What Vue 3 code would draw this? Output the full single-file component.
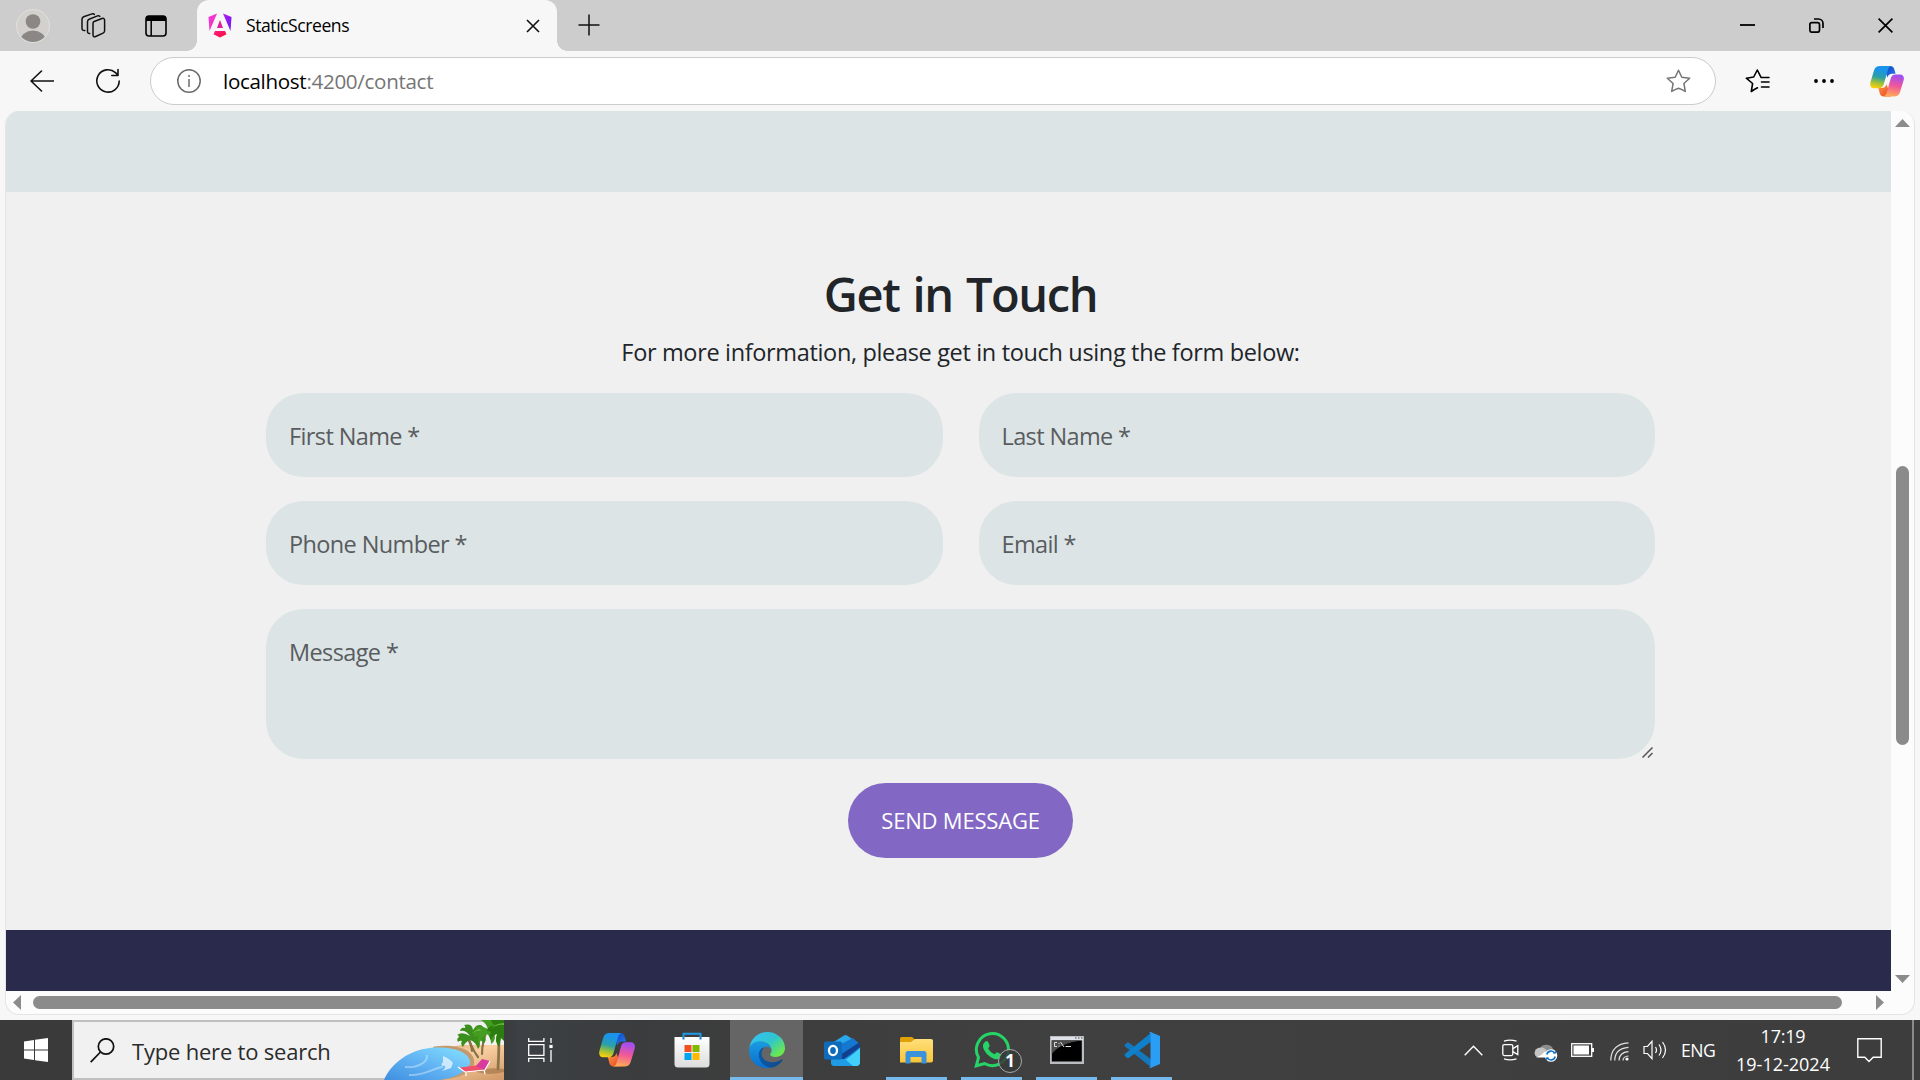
<script setup>
const names = [
  { id: 'first', label: 'First Name *' },
  { id: 'last', label: 'Last Name *' },
  { id: 'phone', label: 'Phone Number *' },
  { id: 'email', label: 'Email *' },
]
</script>

<template>
  <div class="screen">
    <svg class="defs" width="0" height="0">
      <defs>
        <linearGradient id="cpA" x1="0.5" y1="0" x2="0.3" y2="1">
          <stop offset="0.15" stop-color="#1a93ea" /><stop offset="0.5" stop-color="#2ba0a5" />
          <stop offset="0.75" stop-color="#9bc03a" /><stop offset="1" stop-color="#ffcf0a" />
        </linearGradient>
        <linearGradient id="cpB" x1="0.6" y1="0" x2="0.4" y2="1">
          <stop offset="0.05" stop-color="#a34ff0" /><stop offset="0.5" stop-color="#f0579a" />
          <stop offset="1" stop-color="#ffac55" />
        </linearGradient>
        <linearGradient id="cpC" x1="0" y1="0" x2="1" y2="1">
          <stop offset="0" stop-color="#0b3fc0" /><stop offset="1" stop-color="#2b7cf0" />
        </linearGradient>
        <linearGradient id="cpD" x1="0" y1="0" x2="1" y2="1">
          <stop offset="0" stop-color="#ff9a3c" /><stop offset="1" stop-color="#e8402c" />
        </linearGradient>
        <symbol id="copilot" viewBox="0 0 36 34">
          <path fill="url(#cpC)" d="M14 0h7.500c2 0 3.300 1 4 3l1.600 5.500h-3.600c-2.800 0-4.200 1.300-5 4L15 3z" />
          <path fill="url(#cpD)" d="M22 33.500h-7.500c-2 0-3.300-1-4-3L8.800 24h3.700c2.800 0 4.200-1.300 5-4L21 30z" />
          <path fill="url(#cpA)" d="M10.500 0H23c-2.500.3-3.400 2-4.200 4.800L14.500 20c-.9 3-2.300 4.300-5 4.300H4.300C.8 24.300-.3 21.500.4 18L4.300 4.600C5.300 1.400 7.500 0 10.500 0z" />
          <path fill="url(#cpB)" d="M25.500 33.500H13.800c2.400-.4 3.300-2 4-4.600L22 13.500c.9-3 2.200-4.300 5-4.300h4.800c3.500 0 4.600 2.800 3.900 6.200l-4 13.500c-1 3.200-3.200 4.600-6.200 4.600z" />
        </symbol>
      </defs>
    </svg>

    <header class="tabstrip">
      <svg class="avatar" width="34" height="34" viewBox="0 0 34 34">
        <defs><clipPath id="avc"><circle cx="17" cy="17" r="16" /></clipPath></defs>
        <circle cx="17" cy="17" r="16.500" fill="#d3d1ce" stroke="#e2e0dc" />
        <g fill="#8b8784" clip-path="url(#avc)"><circle cx="17" cy="12.500" r="7.300" /><ellipse cx="17" cy="31.500" rx="12.500" ry="10" /></g>
      </svg>
      <svg class="collections" width="26" height="26" viewBox="0 0 26 26" fill="none" stroke="#111" stroke-width="1.500" stroke-linejoin="round" stroke-linecap="round">
        <path d="M13.500 8.800l8.500-3.300c1.500-.5 2.600.2 2.600 1.700v10.600c0 1.200-.5 1.900-1.500 2.300l-7.500 3.400c-1.500.6-2.600 0-2.600-1.600V11c0-1.100-.1-1.700.5-2.200z" />
        <path d="M9.800 20.400c-1.500.2-2.300-.5-2.300-2V8.700c0-1.200.6-2 1.600-2.400l8.400-3.400c1-.4 1.800-.2 2.300.5" />
        <path d="M4.800 17.500c-1.600.2-2.800-.4-2.800-2V6.200C2 5 2.600 4.200 3.600 3.800L12 .9c1-.3 1.800-.2 2.300.5" />
      </svg>
      <svg class="tabmenu" width="22" height="22" viewBox="0 0 22 22">
        <rect x="1" y="1" width="20" height="20" rx="3" fill="none" stroke="#000" stroke-width="1.600" />
        <path d="M1 6V4a3 3 0 0 1 3-3h14a3 3 0 0 1 3 3v2z" /><path d="M6.200 5v16" stroke="#000" stroke-width="1.500" />
      </svg>
      <div class="tab">
        <svg width="24" height="25" viewBox="0 0 24 25">
          <defs>
            <linearGradient id="ngL" x1="0" y1="0" x2="1" y2="1"><stop offset="0" stop-color="#f637e3" /><stop offset="1" stop-color="#f02fae" /></linearGradient>
            <linearGradient id="ngR" x1="0" y1="0" x2="1" y2="1"><stop offset="0" stop-color="#b41ff5" /><stop offset="1" stop-color="#6a14f5" /></linearGradient>
            <linearGradient id="ngB" x1="0" y1="0" x2="1" y2="1"><stop offset="0" stop-color="#ff1a8c" /><stop offset="1" stop-color="#f5102c" /></linearGradient>
          </defs>
          <path fill="url(#ngL)" d="M9 .5L1.500 18 .5 4z" /><path fill="url(#ngR)" d="M15 .5l8.500 3.500-1 14z" />
          <path fill="#e0209b" d="M12 7l3 8H9z" /><path fill="url(#ngB)" d="M7 18h10l1.500 3.200L12 24.600 5.500 21.200z" />
        </svg>
        <span class="tabtitle">StaticScreens</span>
        <svg class="tabclose" width="14" height="14" viewBox="0 0 14 14"><path d="M1 1l12 12M13 1L1 13" stroke="#111" stroke-width="1.600" /></svg>
      </div>
      <svg class="plus" width="22" height="22" viewBox="0 0 22 22"><path d="M11 .5v21M.5 11h21" stroke="#111" stroke-width="1.500" /></svg>
      <div class="wincontrols">
        <svg width="15" height="15" viewBox="0 0 15 15"><path d="M0 7h15" stroke="#000" stroke-width="1.800" /></svg>
        <svg width="15" height="15" viewBox="0 0 15 15" fill="none" stroke="#000" stroke-width="1.700"><rect x=".9" y="4.600" width="9.600" height="9.600" rx="2" /><path d="M5 1h4.500A4.500 4.500 0 0 1 14 5.500V10" /></svg>
        <svg width="15" height="15" viewBox="0 0 15 15"><path d="M.6.6l13.800 13.800M14.400.6L.6 14.400" stroke="#000" stroke-width="1.700" /></svg>
      </div>
    </header>

    <nav class="toolbar">
      <svg class="back" width="24" height="22" viewBox="0 0 24 22" fill="none" stroke="#111" stroke-width="1.600" stroke-linecap="round" stroke-linejoin="round"><path d="M11.500 1L1 11l10.500 10M1 11h22.500" /></svg>
      <svg class="reload" width="26" height="26" viewBox="0 0 26 26" fill="none" stroke="#111" stroke-width="1.600" stroke-linecap="round" stroke-linejoin="round"><path d="M24.200 13A11.200 11.200 0 1 1 20.500 4.600l2.300 2.400M23 1.500V7.500h-6.200" /></svg>
      <div class="address">
        <svg width="24" height="24" viewBox="0 0 24 24" fill="none" stroke="#6b6b6b" stroke-width="1.500"><circle cx="12" cy="12" r="11.200" /><path d="M12 10v8" /><circle cx="12" cy="7" r="1" fill="#6b6b6b" stroke="none" /></svg>
        <span class="url">localhost<span>:4200/contact</span></span>
        <svg class="star" width="25" height="24" viewBox="0 0 25 24" fill="none" stroke="#757575" stroke-width="1.500" stroke-linejoin="round"><path d="M12.500 1.200l3.300 7 7.900 1-5.800 5.300 1.400 7.900q-3.300-2.100-6.800-3.200-3.500 1.100-6.800 3.200l1.400-7.900L1.300 9.200l7.900-1z" /></svg>
      </div>
      <svg class="fav" width="25" height="24" viewBox="0 0 25 24" fill="none" stroke="#000" stroke-width="1.600" stroke-linejoin="round" stroke-linecap="round"><path d="M12.500 18.800q-3.300 1.600-6.200 3.700l1.300-8L1.300 9.200l7.400-1.200 3.600-7 3.500 6.800M16 8.500h8M16.500 13H24M16.500 18H24" /></svg>
      <svg class="dots" width="20" height="4" viewBox="0 0 20 4"><circle cx="2" cy="2" r="1.900" /><circle cx="10" cy="2" r="1.900" /><circle cx="18" cy="2" r="1.900" /></svg>
      <svg width="34" height="31" viewBox="0 0 36 34" preserveAspectRatio="none"><use href="#copilot" width="36" height="34" /></svg>
    </nav>

    <main class="frame">
      <div class="upper">
        <div class="page">
          <div class="band"></div>
          <section class="contact">
            <h1>Get in Touch</h1>
            <p>For more information, please get in touch using the form below:</p>
            <div class="form">
              <label v-for="f in names" :key="f.id" class="field">{{ f.label }}</label>
              <label class="field message">Message *
                <svg class="grip" width="11" height="11" viewBox="0 0 11 11"><path d="M.5 10.500l10-10M6 10.500l4.500-4.500" stroke="#555" stroke-width="1.500" /></svg>
              </label>
            </div>
            <button type="button">SEND MESSAGE</button>
          </section>
          <footer></footer>
        </div>
        <div class="vbar">
          <svg width="15" height="8" viewBox="0 0 15 8"><path d="M0 8L7.500 0 15 8z" /></svg>
          <div class="vtrack"><div class="vthumb"></div></div>
          <svg width="15" height="8" viewBox="0 0 15 8"><path d="M0 0h15L7.500 8z" /></svg>
        </div>
      </div>
      <div class="hbar">
        <svg width="8" height="15" viewBox="0 0 8 15"><path d="M8 0v15L0 7.500z" /></svg>
        <div class="hthumb"></div>
        <svg width="8" height="15" viewBox="0 0 8 15"><path d="M0 0v15l8-7.500z" /></svg>
      </div>
    </main>

    <div class="taskbar">
      <div class="start">
        <svg width="24" height="24" viewBox="0 0 24 24" fill="#fff"><path d="M0 3.400l10-1.400v9.400H0zM11 1.800L24 0v11.400H11zM0 12.400h10V22L0 20.600zM11 12.400h13V24l-13-1.800z" /></svg>
      </div>
      <div class="search">
        <svg class="glass" width="25" height="25" viewBox="0 0 25 25" fill="none" stroke="#111" stroke-width="1.700"><circle cx="16" cy="8.500" r="7.700" /><path d="M10.500 14L.7 24.200" /></svg>
        <span>Type here to search</span>
        <svg class="beach" width="120" height="60" viewBox="0 0 120 60">
          <defs>
            <linearGradient id="sand" x1="0" y1="0" x2="1" y2="1"><stop offset="0" stop-color="#c98f5c" /><stop offset="0.45" stop-color="#fbd0a4" /><stop offset="1" stop-color="#cf9764" /></linearGradient>
            <linearGradient id="sea" x1="0" y1="1" x2="1" y2="0"><stop offset="0" stop-color="#3f8fe0" /><stop offset="0.5" stop-color="#62b4f3" /><stop offset="1" stop-color="#86e2ff" /></linearGradient>
          </defs>
          <path fill="url(#sand)" d="M18 60C30 40 52 26 82 25h38v35z" />
          <path fill="#c39a70" d="M50 26.500c24-3 42 4 40 17.500-2 9-15 14-33 16H20z" />
          <path fill="url(#sea)" d="M0 60C7 43 26 29 50 27.500c22-1 37 6 36 16C83 52 68 60 50 60z" />
          <path fill="none" stroke="#d9f2ff" stroke-opacity=".45" stroke-width="1.800" d="M43 35c1 8-10 13-22 12M25 55c16 1 24-7 34-8" />
          <path fill="#fff" fill-opacity=".65" d="M59 36q7 3 10 7l-2 5-9 3q4-3 3-5-6 0-2-4z" />
          <g fill="none" stroke="#867444" stroke-width="2.200" stroke-linecap="round"><path d="M83 17q5 9 5 14" /><path d="M85 19q3 10 9 18" /><path d="M103 10q-5 13-5 24" /><path d="M115 10q0 22-1 39" stroke-width="2.800" stroke="#8b7548" /></g>
          <g fill="#3b8f1c">
            <path d="M86 16q-8-5-13-1 2 0 2 2-3 2-1 5 2-2 4-1-2 3 1 6 2-5 7-7 6 2 8 9 4-5 0-9 5 0 5 4 5-4 1-9-5-4-8-2 4-4 8-3-1-7-8-4l-3 4Q88 3 80 5q2 1 1 3-4-1-5 3 6-1 10 5z" />
            <path fill="#449c20" d="M104 9q-9-5-13-1 3 0 2 3-4 1-3 6l5-1q-3 4 0 8 3-7 8-10 4 3 4 10 6-4 3-11 4 0 5 5 4-6-1-10l-5-1q6-2 7-7H97q5 3 7 9z" />
            <path fill="#2c7d10" d="M120 0h-13q1 5 6 6-9-1-10 5 3-1 4 2-3 3 0 7 2-5 6-6-3 7 2 13l2-9 3 3z" />
            <path fill="#69b83c" d="M88 14q3-5 8-5l1 2q-5-1-9 3zM107 9q5-6 13-6v2q-7-1-13 4z" />
          </g>
          <path fill="#9d6f42" fill-opacity=".6" d="M92 51q12-4 28-2v3q-15 4-27 0z" />
          <path fill="#f0506a" d="M76 47.500l20-2.500 6 5-22 2z" /><path fill="#d93a9d" d="M92 46l6-7 8 2-6 9z" />
          <path fill="none" stroke="#fff" stroke-width="1.200" d="M74 47l7 5 20-2 5-9M82 52v4M100 50l1 4" />
        </svg>
      </div>
      <div class="apps">
        <div class="app"><svg class="taskview" width="25" height="24" viewBox="0 0 25 24" fill="none" stroke="#fff" stroke-width="1.300"><path d="M.7 0v3.300h15.200V0M.7 24v-3.600h15.200V24M.7 6.700h15.200v10.600H.7zM23 0v5M23 12v12" /><path d="M21.400 6.900h3.200v3.200h-3.200z" fill="#fff" stroke="none" /></svg></div>
        <div class="app"><svg width="36" height="34"><use href="#copilot" width="36" height="34" /></svg></div>
        <div class="app"><svg width="36" height="36" viewBox="0 0 36 36">
          <defs><linearGradient id="st" x1="0" y1="0" x2="0" y2="1"><stop offset="0" stop-color="#fff" /><stop offset="1" stop-color="#dcdcdc" /></linearGradient></defs>
          <path d="M9.500 9V1.800h17V9" fill="none" stroke="#1e9be8" stroke-width="2" /><path fill="url(#st)" d="M.5 5h35v27a3.500 3.500 0 0 1-3.500 3.500H4A3.500 3.500 0 0 1 .5 32z" /><path d="M9.500 5v2.500M26.500 5v2.500" stroke="#1480cc" stroke-width="2" />
          <path fill="#f25022" d="M10.500 13h7v7h-7z" /><path fill="#7fba00" d="M18.500 13h7v7h-7z" /><path fill="#00a4ef" d="M10.500 21h7v7h-7z" /><path fill="#ffb900" d="M18.500 21h7v7h-7z" />
        </svg></div>
        <div class="app active"><svg width="36" height="36" viewBox="0 0 256 256">
          <defs>
            <linearGradient id="e1" x1=".2" y1="0" x2="1" y2=".7"><stop offset="0" stop-color="#35c1f1" /><stop offset=".5" stop-color="#2fc5cf" /><stop offset="1" stop-color="#6be84e" /></linearGradient>
            <linearGradient id="e2" x1=".5" y1="0" x2=".5" y2="1"><stop offset="0" stop-color="#1a9be0" /><stop offset="1" stop-color="#0a6fd0" /></linearGradient>
            <linearGradient id="e3" x1="0" y1=".5" x2="1" y2=".5"><stop offset="0" stop-color="#0c59a4" /><stop offset="1" stop-color="#114a8b" /></linearGradient>
          </defs>
          <path fill="url(#e1)" d="M2 117C10 50 62 0 129 0c76 0 127 56 127 113 0 37-29 64-66 64-31 0-45-12-38-22 5-8 8-15 8-26 0-30-32-60-73-60C47 69 12 94 2 117z" />
          <path fill="url(#e2)" d="M0 130c0-34 33-64 77-64 48 0 84 32 83 63-2-17-20-27-38-24-26 4-42 27-42 57 0 44 35 80 88 87-15 5-27 7-42 7C55 256 0 200 0 130z" />
          <path fill="url(#e3)" d="M112 108c-18 12-23 33-22 50 2 36 38 59 77 57 23-1 43-8 64-20 6-3 10 2 6 7-21 31-49 47-77 52-52-5-90-42-90-89 0-31 17-53 42-57z" />
        </svg></div>
        <div class="app"><svg width="36" height="31" viewBox="0 0 36 31">
          <path fill="#28a8ea" d="M8 8L20 .5q1.500-1 3 0L36 9v18q0 4-4 4H11q-4 0-4-4V10z" /><path fill="#1478d0" d="M17 9L29 3l7 7v5L19 25z" /><path fill="#123f8e" d="M16 20l20-13v5L20 24h-8z" /><path fill="#41d0fa" d="M15 31L36 13v14q0 4-4 4z" /><path fill="#1f9be5" d="M7 24h14l8 7H11q-4 0-4-4z" />
          <rect y="6.500" width="18" height="18" rx="1.800" fill="#0f6cbd" /><ellipse cx="9" cy="15.500" rx="4" ry="4.700" fill="none" stroke="#fff" stroke-width="2.300" />
        </svg></div>
        <div class="app run"><svg width="33" height="27" viewBox="0 0 33 27">
          <defs><linearGradient id="fo" x1="0" y1="0" x2="0" y2="1"><stop offset="0" stop-color="#ffdf7c" /><stop offset="1" stop-color="#f9c638" /></linearGradient></defs>
          <path fill="#e0a106" d="M0 1.500Q0 0 1.500 0H12l3 2.500V8H0z" /><path fill="url(#fo)" d="M0 5h11l4-3h16q2 0 2 1.500v20q0 2-2 2H0z" /><path fill="#3a92dc" d="M5.500 26.500V16.500q0-2.500 2.500-2.500h16q2.500 0 2.500 2.500v10h-5V20h-11v6.500z" />
        </svg></div>
        <div class="app run"><svg width="36" height="36" viewBox="0 0 36 36">
          <path fill="none" stroke="#25d366" stroke-width="3" d="M2.300 33.800L4.500 25.500A16 16 0 1 1 10.500 31.500z" /><path fill="#25d366" d="M11.500 9.500c.7-.7 2-.7 2.500.2l1.600 3.600c.3.800-.2 1.500-1.500 3 1.500 3 3.800 4.900 6.700 6 1.300-1.500 1.800-2.300 2.700-1.900l3.700 1.800c.9.500.3 3-.8 4-2.500 2.300-7 1-11.200-2.300-4-3.200-6.600-7.500-6.200-10.700.3-1.800 1.300-2.900 2.500-3.700z" />
        </svg><b class="badge">1</b></div>
        <div class="app run"><svg width="34" height="28" viewBox="0 0 34 28">
          <path fill="#b9bcc0" d="M0 0h34v28H0z" /><path fill="#dfe3e8" d="M1 1h32v3H1z" /><path fill="#000" d="M1.800 4.500h30v21h-30z" /><path fill="#4c4c4c" d="M1.800 4.500h30Q10 7 1.800 18z" /><path d="M25 2h1.500M28 2h1.500M31 2h1.500" stroke="#345" /><path d="M7 6.500H4.500v4H7M9 7v1M9 9.500v1M10.500 6l3.500 5M15.500 10.500H21" fill="none" stroke="#ddd" />
        </svg></div>
        <div class="app run"><svg width="36" height="36" viewBox="0 0 36 36">
          <path fill="#1577bd" d="M1 12.500l2-1.700q1-.7 2 0L28 28v8L1 14.500q-1-1 0-2z" /><path fill="#0f80cc" d="M1 24l2 1.800q1 .7 2 0L28 9V0L1 22q-1 1 0 2z" /><path fill="#2a9df4" d="M26.500 0L36 4v28l-9.500 4q-1-.3-1.500-1 1.500.5 1.500-1.200V2.200Q26.500.5 25 1q.5-.7 1.500-1z" />
        </svg></div>
      </div>
      <div class="tray">
        <svg width="19" height="11" viewBox="0 0 19 11"><path d="M.7 10.200L9.500 1.300l8.800 8.900" fill="none" stroke="#fff" stroke-width="1.400" /></svg>
        <svg class="meet" width="17" height="22" viewBox="0 0 17 22" fill="none" stroke="#fff" stroke-width="1.300"><rect x=".8" y="5.600" width="10" height="11" rx="1.500" /><path d="M10.800 9.600l5-3v9l-5-3M2 2.200Q8 0 14.500 2.200M2 19.800q6 2.200 12.500 0" /></svg>
        <svg class="cloud" width="25" height="20" viewBox="0 0 25 20"><path fill="#8d8d8d" d="M7 6a7 6 0 0 1 13 1q3 1 3 5l-9 2z" /><path fill="#c4c4c4" d="M4 15a5 5 0 0 1 1-9q6-2 9 3v6z" /><path fill="#fff" d="M3 15.500q4-1 9-6l6 6z" /><circle cx="18" cy="13.500" r="6.300" fill="#fff" /><path d="M13.800 12.500a4.300 4.300 0 0 1 8-1.200M22.200 14.500a4.300 4.300 0 0 1-8 1.200" fill="none" stroke="#1173c8" stroke-width="1.600" /><path fill="#1173c8" d="M20 11.500h3.200V8.500zM16 15.500h-3.200v3z" /></svg>
        <svg class="battery" width="23" height="14" viewBox="0 0 23 14"><rect x=".7" y=".7" width="20" height="12.600" fill="none" stroke="#fff" stroke-width="1.300" /><path fill="#fff" d="M2.500 2.500h15.500v9H2.500zM21 5h2v4h-2z" /></svg>
        <svg class="wifi" width="20" height="19" viewBox="0 0 20 19" fill="none" stroke="#fff" stroke-width="1.200"><path d="M.8 18.500Q1 2 18.500.8M4.800 18.500q0-12.200 13.700-13.200M9 18.500Q9.200 10.300 18.500 9.600M13 18.500q.2-4.300 5.500-4.500" stroke-opacity=".85" /><circle cx="17" cy="17" r="1.600" fill="#fff" stroke="none" /></svg>
        <svg class="volume" width="24" height="20" viewBox="0 0 24 20" fill="none" stroke="#fff" stroke-width="1.200"><path d="M1 6.500h3.500L9 1.300v17.400l-4.500-5.200H1zM12.500 7q2 3 0 6M16 4.500q4 5.500 0 11M19.500 2q6 8 0 16" /></svg>
        <span class="lang">ENG</span>
        <div class="clock"><span class="time">17:19</span><span>19-12-2024</span></div>
        <svg class="notes" width="25" height="25" viewBox="0 0 25 25"><path d="M.8.8h23.400v18.400h-8L12 23.500l-4.200-4.300h-7z" fill="none" stroke="#fff" stroke-width="1.400" /></svg>
        <i class="peek"></i>
      </div>
    </div>
  </div>
</template>

<style>
html, body { margin: 0; background: #f7f7f7; overflow: hidden; }
</style>

<style scoped>
.screen { width: 1920px; height: 1080px; display: flex; flex-direction: column; background: #f7f7f7; font-family: "Open Sans", "Noto Sans", sans-serif; color: #000; overflow: hidden; }
.defs { position: absolute; }
svg { display: block; flex: none; }
.tabstrip { height: 51px; flex: none; display: flex; align-items: center; background: #cdcdcd; }
.avatar { margin: 1px 0 0 16px; }
.collections { margin-left: 30px; }
.tabmenu { margin-left: 39px; }
.tab { position: relative; width: 360px; height: 51px; box-sizing: border-box; margin-left: 30px; padding: 0 17px 0 11px; display: flex; align-items: center; background: #f7f7f7; border-radius: 12px 12px 0 0; }
.tab::before, .tab::after { content: ""; position: absolute; bottom: 0; width: 10px; height: 10px; }
.tab::before { left: -10px; background: radial-gradient(circle at 0 0, transparent 9.500px, #f7f7f7 10px); }
.tab::after { right: -10px; background: radial-gradient(circle at 100% 0, transparent 9.500px, #f7f7f7 10px); }
.tabtitle { margin: 0 0 1px 14px; font-size: 17.6px; letter-spacing: -.46px; }
.tabclose { margin: 1px 0 0 auto; }
.plus { margin: 0 0 2px 21px; }
.wincontrols { display: flex; gap: 54px; margin: 0 27px 0 auto; }

.toolbar { height: 60px; flex: none; display: flex; align-items: center; box-sizing: border-box; padding: 0 16px 0 30px; }
.back { margin-bottom: 1px; }
.reload { margin-left: 41px; }
.address { margin-left: 29px; width: 1566px; height: 48px; box-sizing: border-box; display: flex; align-items: center; padding: 0 24px 0 26px; border: 1px solid #cbcbcb; border-radius: 24px; background: #fff; }
.url { margin-left: 22px; font-size: 20.6px; letter-spacing: -.32px; }
.url span { color: #757575; }
.star { margin-left: auto; }
.fav { margin-left: 29px; }
.dots { margin: 0 36px 0 44px; }

.frame { margin: 0 5px 5px; height: 904px; flex: none; display: flex; flex-direction: column; box-sizing: border-box; border: 1px solid #e4e4e4; border-top: 0; border-radius: 14px; overflow: hidden; background: #fcfcfc; }
.upper { display: flex; height: 880px; flex: none; }
.page { width: 1885px; flex: none; display: flex; flex-direction: column; }
.band { height: 81px; background: #dce4e5; }
.contact { height: 738px; box-sizing: border-box; padding: 73px 0 0 24px; display: flex; flex-direction: column; align-items: center; background: #f0f0f0; color: #212529; }
h1 { margin: 0; font-size: 47px; line-height: 58px; font-weight: 600; letter-spacing: -1.4px; word-spacing: 2.4px; }
p { margin: 11px 0 23px; font-size: 23.5px; line-height: 36px; letter-spacing: -.34px; }
.form { width: 1389px; display: grid; grid-template-columns: 1fr 1fr; gap: 24px 36px; }
.field { height: 84px; box-sizing: border-box; padding: 25px 23px; border-radius: 37.5px; background: #dce4e5; color: #595c5f; font-size: 23.5px; line-height: 37px; letter-spacing: -.62px; }
.message { position: relative; grid-column: 1 / 3; height: 150px; }
.grip { position: absolute; right: 2px; bottom: 1px; }
button { margin-top: 24px; width: 225px; height: 75px; border: 0; border-radius: 37.5px; background: #8268c4; color: #fff; font: 22px "Open Sans", "Noto Sans", sans-serif; letter-spacing: -.2px; padding: 0 0 1px; }
footer { height: 61px; background: #2a2a4c; }
.vbar { flex: 1; display: flex; flex-direction: column; align-items: center; padding: 8px 0; }
.vbar svg, .hbar svg { fill: #8b8b8b; }
.vtrack { flex: 1; padding-top: 339px; }
.vthumb { width: 13px; height: 279px; border-radius: 7px; background: #8b8b8b; }
.hbar { flex: 1; display: flex; align-items: center; padding-left: 7px; }
.hthumb { margin: 0 34px 0 12px; width: 1809px; height: 13px; border-radius: 7px; background: #8b8b8b; }

.taskbar { height: 60px; flex: none; display: flex; background: linear-gradient(90deg, #3a3a3a 0, #3a3a3a 26%, #3c4145 27%, #3b3c3d 33%, #414040 55%, #3d3d3d 100%); }
.start { width: 72px; display: flex; align-items: center; justify-content: center; }
.search { position: relative; width: 432px; box-sizing: border-box; border: 2px solid #c0c0c0; border-right: 0; background: #f1f1f1; display: flex; align-items: center; color: #2b2b2b; }
.glass { margin-left: 16px; }
.search span { margin-left: 17px; font-size: 22px; letter-spacing: -.2px; padding-top: 2px; }
.beach { position: absolute; right: 0; top: -2px; }
.apps { display: flex; }
.app { position: relative; width: 75px; display: flex; align-items: center; justify-content: center; }
.taskview { margin-right: 2px; }
.app.active { background: linear-gradient(#656565, #656565) center / 73px 100% no-repeat; }
.app.active::after, .run::after { content: ""; position: absolute; left: 7px; right: 7px; bottom: 0; height: 3px; background: #76b9ed; }
.app.active::after { left: 1px; right: 1px; }
.badge { position: absolute; left: 44px; top: 29px; width: 24px; height: 24px; box-sizing: border-box; border: 1px solid #aaa; border-radius: 50%; background: #383a39d9; color: #fff; font-size: 17px; line-height: 22px; text-align: center; }
.tray { display: flex; align-items: center; margin-left: auto; color: #fff; font-size: 17.6px; }
.meet { margin-left: 19px; }
.cloud { margin: 4px 0 0 14px; }
.battery { margin-left: 13px; }
.wifi { margin: 2px 0 0 16px; }
.volume { margin-left: 13px; }
.lang { margin-left: 14px; width: 35px; letter-spacing: -.5px; }
.clock { margin-left: 20px; width: 94px; display: flex; flex-direction: column; align-items: center; line-height: 28px; font-size: 18px; white-space: nowrap; }
.time { letter-spacing: -.2px; }
.notes { margin-left: 27px; }
.peek { width: 2px; height: 60px; margin: 0 6px 0 30px; background: #8a8a8a; }
</style>
